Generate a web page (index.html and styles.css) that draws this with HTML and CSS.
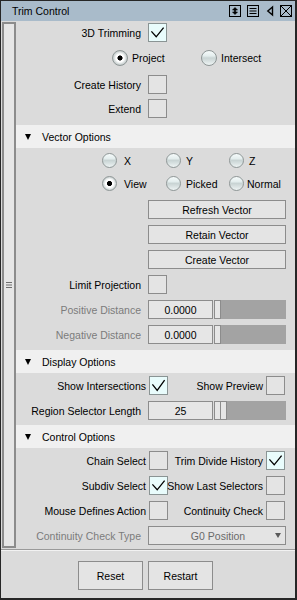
FILE: index.html
```html
<!DOCTYPE html>
<html>
<head>
<meta charset="utf-8">
<link rel="stylesheet" href="styles.css">
</head>
<body>
<div class="window">
  <div class="titlebar">
    <span class="title">Trim Control</span>
    <svg class="tb-icons" width="66" height="14" viewBox="0 0 66 14">
      <rect x="2.5" y="1.5" width="11" height="11" fill="none" stroke="#000"/>
      <path d="M8 3.5 L10.5 6 L5.5 6 Z M8 10.5 L10.5 8 L5.5 8 Z" fill="#000" stroke="#000" stroke-width="0.6" stroke-linejoin="round"/>
      <rect x="7.2" y="5" width="1.6" height="4" fill="#000"/>
      <rect x="20.5" y="1.5" width="11" height="11" fill="none" stroke="#000"/>
      <path d="M22.5 4.5 H29.5 M22.5 7 H29.5 M22.5 9.5 H29.5" stroke="#000" stroke-width="1"/>
      <path d="M40.8 7 L45.5 3 L45.5 11 Z" fill="none" stroke="#000" stroke-width="1.4" stroke-linejoin="miter"/>
      <rect x="53.5" y="1.5" width="11" height="11" fill="none" stroke="#000"/>
      <path d="M54 2 L64 12 M64 2 L54 12" stroke="#000" stroke-width="1"/>
    </svg>
  </div>
  <div class="main">
    <div class="sidebar">
      <svg class="grip" width="6" height="8" viewBox="0 0 6 8">
        <path d="M0 1.5 H6 M0 4 H6 M0 6.5 H6" stroke="#6e6e6e" stroke-width="1"/>
      </svg>
    </div>
    <div class="content">
      <div class="row mt2"><span class="lbl">3D Trimming</span><span class="cb on"><svg width="17" height="17" viewBox="0 0 17 17"><polyline points="2.4,7.4 7.2,12.8 14.6,3.6" fill="none" stroke="#000" stroke-width="1.3"/></svg></span></div>
      <div class="rrow rr-proj mt8">
        <span class="ritem w89"><span class="radio on"></span><span class="rl g4">Project</span></span>
        <span class="ritem"><span class="radio"></span><span class="rl g4">Intersect</span></span>
      </div>
      <div class="row mt9"><span class="lbl">Create History</span><span class="cb"></span></div>
      <div class="row mt5"><span class="lbl">Extend</span><span class="cb"></span></div>

      <div class="hdr mt7"><span class="tri"></span><span>Vector Options</span></div>
      <div class="rrow rr-xyz mt5">
        <span class="ritem w64"><span class="radio"></span><span class="rl g7">X</span></span>
        <span class="ritem w63"><span class="radio"></span><span class="rl g5">Y</span></span>
        <span class="ritem"><span class="radio"></span><span class="rl g5">Z</span></span>
      </div>
      <div class="rrow rr-xyz mt8">
        <span class="ritem w64"><span class="radio on"></span><span class="rl g7">View</span></span>
        <span class="ritem w63"><span class="radio"></span><span class="rl g5">Picked</span></span>
        <span class="ritem"><span class="radio"></span><span class="rl g3">Normal</span></span>
      </div>
      <div class="row mt9"><span class="lbl"></span><span class="btn">Refresh Vector</span></div>
      <div class="row"><span class="lbl"></span><span class="btn">Retain Vector</span></div>
      <div class="row"><span class="lbl"></span><span class="btn">Create Vector</span></div>
      <div class="row"><span class="lbl">Limit Projection</span><span class="cb"></span></div>
      <div class="row"><span class="lbl dim">Positive Distance</span><span class="ctl"><span class="field">0.0000</span><span class="handle"></span><span class="track"></span></span></div>
      <div class="row"><span class="lbl dim">Negative Distance</span><span class="ctl"><span class="field">0.0000</span><span class="handle"></span><span class="track"></span></span></div>

      <div class="hdr mt6"><span class="tri"></span><span>Display Options</span></div>
      <div class="row mt3"><span class="lbl2">Show Intersections</span><span class="cb on ml3"><svg width="17" height="17" viewBox="0 0 17 17"><polyline points="2.4,7.4 7.2,13.4 14.6,3.2" fill="none" stroke="#000" stroke-width="1.3"/></svg></span><span class="lbl3">Show Preview</span><span class="cb ml3"></span></div>
      <div class="row"><span class="lbl">Region Selector Length</span><span class="ctl"><span class="field">25</span><span class="handle"></span><span class="handle h2"></span><span class="track"></span></span></div>

      <div class="hdr mt5"><span class="tri"></span><span>Control Options</span></div>
      <div class="row mt3"><span class="lbl2">Chain Select</span><span class="cb ml3"></span><span class="lbl3">Trim Divide History</span><span class="cb on ml3"><svg width="17" height="17" viewBox="0 0 17 17"><polyline points="2.4,7.4 7.2,12.8 14.6,3.6" fill="none" stroke="#000" stroke-width="1.3"/></svg></span></div>
      <div class="row"><span class="lbl2">Subdiv Select</span><span class="cb on ml3"><svg width="17" height="17" viewBox="0 0 17 17"><polyline points="2.4,7.4 7.2,12.8 14.6,3.6" fill="none" stroke="#000" stroke-width="1.3"/></svg></span><span class="lbl3">Show Last Selectors</span><span class="cb ml3"></span></div>
      <div class="row"><span class="lbl2">Mouse Defines Action</span><span class="cb ml3"></span><span class="lbl3">Continuity Check</span><span class="cb ml3"></span></div>
      <div class="row"><span class="lbl dim">Continuity Check Type</span><span class="dd"><span class="dd-text">G0 Position</span><span class="dd-arrow"></span></span></div>
    </div>
  </div>
  <div class="sep"></div>
  <div class="footer">
    <span class="fbtn">Reset</span>
    <span class="fbtn">Restart</span>
  </div>
</div>
</body>
</html>
```
FILE: styles.css
```css
html, body {
  margin: 0;
  padding: 0;
  background: #dbdbdb;
}
body {
  font-family: "Liberation Sans", Arial, sans-serif;
  font-size: 10.5px;
  color: #000;
}
.window {
  width: 297px;
  height: 600px;
  box-sizing: border-box;
  border-style: solid;
  border-color: #262626;
  border-width: 1px 2px 2px 1px;
  background: #dbdbdb;
  display: flex;
  flex-direction: column;
}
.titlebar {
  height: 20px;
  flex: none;
  background: #a9bbca;
  display: flex;
  align-items: center;
  padding-left: 11px;
}
.title {
  font-size: 10.5px;
}
.tb-icons {
  margin-left: auto;
  margin-right: 2px;
  display: block;
}
.main {
  height: 528px;
  flex: none;
  display: flex;
}
.sidebar {
  width: 14px;
  flex: none;
  margin: 1px 0 1px 1px;
  box-sizing: border-box;
  border: 2px solid #8c8c8c;
  background: #e6e6e6;
  display: flex;
  align-items: center;
  justify-content: center;
}
.grip {
  display: block;
}
.content {
  flex: 1;
  display: flex;
  flex-direction: column;
}
.row {
  display: flex;
  align-items: center;
  height: 19px;
  margin-top: 6px;
  flex: none;
}
.mt2 { margin-top: 2px; }
.mt3 { margin-top: 3px; }
.mt5 { margin-top: 5px; }
.mt6 { margin-top: 6px; }
.mt7 { margin-top: 7px; }
.mt8 { margin-top: 8px; }
.mt9 { margin-top: 9px; }
.lbl {
  width: 125px;
  margin-right: 7px;
  text-align: right;
  white-space: nowrap;
  flex: none;
}
.lbl2 {
  width: 130px;
  text-align: right;
  white-space: nowrap;
  flex: none;
}
.lbl3 {
  width: 95px;
  text-align: right;
  white-space: nowrap;
  flex: none;
  direction: rtl;
}
.dim {
  color: #7b7b7b;
}
.ml3 {
  margin-left: 3px;
}
.cb {
  width: 19px;
  height: 19px;
  flex: none;
  box-sizing: border-box;
  border: 1px solid #8c8c8c;
  background: #e4e4e4;
  display: block;
}
.cb svg {
  display: block;
}
.cb.on {
  background: #e9fcfc;
  border-color: #8a9494;
}
.rrow {
  display: flex;
  align-items: center;
  height: 15px;
  flex: none;
}
.rr-proj {
  padding-left: 96px;
  height: 16px;
}
.rr-xyz {
  padding-left: 86px;
}
.ritem {
  display: flex;
  align-items: center;
  flex: none;
}
.w89 { width: 89px; }
.w64 { width: 64px; }
.w63 { width: 63px; }
.g3 { margin-left: 3px; }
.g4 { margin-left: 4px; }
.g5 { margin-left: 5px; }
.g7 { margin-left: 7px; }
.radio {
  width: 15px;
  height: 15px;
  flex: none;
  box-sizing: border-box;
  border-radius: 50%;
  border: 1px solid #8e9696;
  background: linear-gradient(to bottom, #f6fbfb 0%, #e4eeee 35%, #c9d4d4 50%, #d7e0e0 70%, #eef4f4 100%);
}
.rr-proj .radio {
  width: 16px;
  height: 16px;
}
.radio.on {
  background: radial-gradient(circle, #000 0, #000 2.2px, #fff 2.9px, #fff 4px, #dfe4e4 5.5px, #c4caca 7px);
}
.btn {
  width: 138px;
  height: 19px;
  box-sizing: border-box;
  border: 1px solid #8c8c8c;
  background: #e4e4e4;
  display: flex;
  align-items: center;
  justify-content: center;
  flex: none;
}
.ctl {
  width: 138px;
  height: 19px;
  display: flex;
  flex: none;
}
.field {
  width: 65px;
  height: 19px;
  box-sizing: border-box;
  border: 1px solid #8c8c8c;
  background: #e6e6e6;
  display: flex;
  align-items: center;
  justify-content: center;
  flex: none;
}
.handle {
  width: 7px;
  height: 19px;
  box-sizing: border-box;
  border: 1px solid #8c8c8c;
  background: #e6e6e6;
  margin-left: 1px;
  flex: none;
}
.handle.h2 {
  margin-left: 0;
  width: 6px;
  border-left: 0;
}
.track {
  flex: 1;
  height: 19px;
  background: #a3a3a3;
}
.hdr {
  height: 23px;
  flex: none;
  background: #f0f0f0;
  display: flex;
  align-items: center;
}
.tri {
  width: 0;
  height: 0;
  margin-left: 9px;
  margin-right: 11px;
  border-left: 3px solid transparent;
  border-right: 3px solid transparent;
  border-top: 6px solid #000;
}
.dd {
  width: 138px;
  height: 19px;
  box-sizing: border-box;
  border: 1px solid #8c8c8c;
  background: #e4e4e4;
  display: flex;
  align-items: center;
  padding-left: 12px;
  color: #6a6a6a;
  flex: none;
}
.dd-text {
  flex: 1;
  text-align: center;
}
.dd-arrow {
  width: 0;
  height: 0;
  margin-right: 4px;
  border-left: 3.5px solid transparent;
  border-right: 3.5px solid transparent;
  border-top: 5px solid #5a5a5a;
}
.sep {
  height: 1px;
  flex: none;
  border-top: 1px solid #9a9a9a;
  background: #f2f2f2;
  margin-top: 0;
}
.footer {
  flex: 1;
  display: flex;
  align-items: flex-start;
  padding-top: 10px;
  padding-left: 77px;
  gap: 5px;
}
.fbtn {
  width: 65px;
  height: 29px;
  box-sizing: border-box;
  border: 1px solid #8c8c8c;
  background: #e4e4e4;
  display: flex;
  align-items: center;
  justify-content: center;
}
```
